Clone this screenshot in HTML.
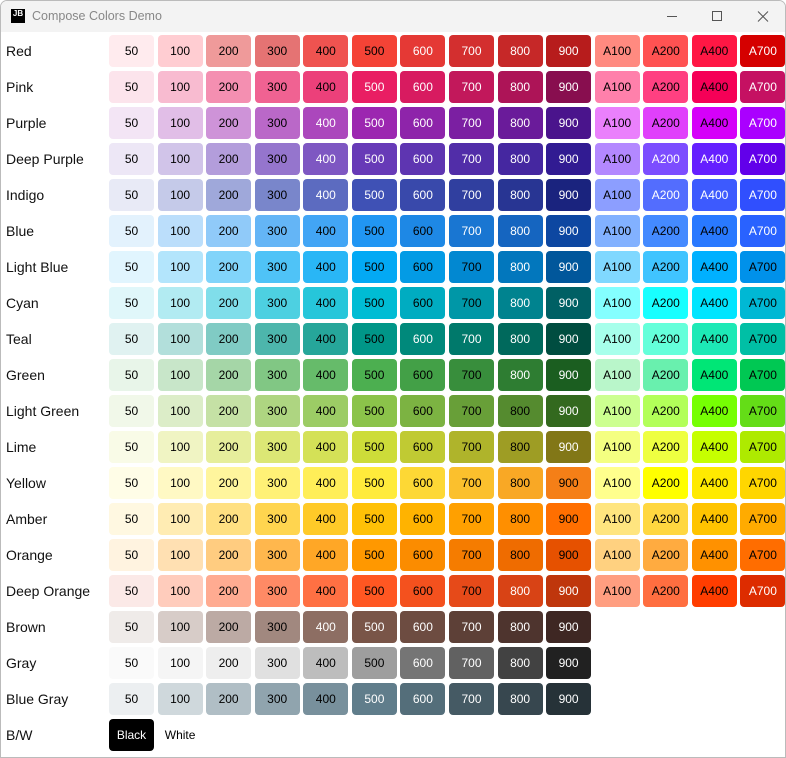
<!DOCTYPE html>
<html><head><meta charset="utf-8"><style>
html,body{margin:0;padding:0;width:786px;height:758px;overflow:hidden;background:#fff;font-family:"Liberation Sans",sans-serif}
#win{position:absolute;left:0;top:0;width:784px;height:756px;border:1px solid #bbb;border-radius:7px 7px 0 0;background:#fff;overflow:hidden}
#tb{position:absolute;left:0;top:0;width:784px;height:31px;background:#f3f3f3}
#logo{position:absolute;left:10px;top:8px;width:14px;height:14px;background:#000;color:#fff;font:bold 8px "Liberation Sans",sans-serif;line-height:9px;text-align:center}
#title{position:absolute;left:31px;top:8px;font-size:12.5px;color:#888}
.lbl{position:absolute;left:5px;font-size:14px;color:#111;line-height:32px}
.c{position:absolute;width:45px;height:32px;border-radius:4px;font-size:12px;line-height:32px;text-align:center}
</style></head><body>
<div id="win">
<div id="tb"><div id="logo">JB<br>_</div><div id="title">Compose Colors Demo</div>
<svg style="position:absolute;left:600px;top:0" width="186" height="31">
<line x1="66" y1="15.5" x2="76" y2="15.5" stroke="#555" stroke-width="1"/>
<rect x="111.5" y="10.5" width="9" height="9" fill="none" stroke="#555"/>
<path d="M157 10.5L167 20.5M167 10.5L157 20.5" stroke="#555"/>
</svg></div>
<div id="g"></div>
</div>
<script>
var P=[
["Red","FFEBEE FFCDD2 EF9A9A E57373 EF5350 F44336 E53935 D32F2F C62828 B71C1C FF8A80 FF5252 FF1744 D50000"],
["Pink","FCE4EC F8BBD0 F48FB1 F06292 EC407A E91E63 D81B60 C2185B AD1457 880E4F FF80AB FF4081 F50057 C51162"],
["Purple","F3E5F5 E1BEE7 CE93D8 BA68C8 AB47BC 9C27B0 8E24AA 7B1FA2 6A1B9A 4A148C EA80FC E040FB D500F9 AA00FF"],
["Deep Purple","EDE7F6 D1C4E9 B39DDB 9575CD 7E57C2 673AB7 5E35B1 512DA8 4527A0 311B92 B388FF 7C4DFF 651FFF 6200EA"],
["Indigo","E8EAF6 C5CAE9 9FA8DA 7986CB 5C6BC0 3F51B5 3949AB 303F9F 283593 1A237E 8C9EFF 536DFE 3D5AFE 304FFE"],
["Blue","E3F2FD BBDEFB 90CAF9 64B5F6 42A5F5 2196F3 1E88E5 1976D2 1565C0 0D47A1 82B1FF 448AFF 2979FF 2962FF"],
["Light Blue","E1F5FE B3E5FC 81D4FA 4FC3F7 29B6F6 03A9F4 039BE5 0288D1 0277BD 01579B 80D8FF 40C4FF 00B0FF 0091EA"],
["Cyan","E0F7FA B2EBF2 80DEEA 4DD0E1 26C6DA 00BCD4 00ACC1 0097A7 00838F 006064 84FFFF 18FFFF 00E5FF 00B8D4"],
["Teal","E0F2F1 B2DFDB 80CBC4 4DB6AC 26A69A 009688 00897B 00796B 00695C 004D40 A7FFEB 64FFDA 1DE9B6 00BFA5"],
["Green","E8F5E9 C8E6C9 A5D6A7 81C784 66BB6A 4CAF50 43A047 388E3C 2E7D32 1B5E20 B9F6CA 69F0AE 00E676 00C853"],
["Light Green","F1F8E9 DCEDC8 C5E1A5 AED581 9CCC65 8BC34A 7CB342 689F38 558B2F 33691E CCFF90 B2FF59 76FF03 64DD17"],
["Lime","F9FBE7 F0F4C3 E6EE9C DCE775 D4E157 CDDC39 C0CA33 AFB42B 9E9D24 827717 F4FF81 EEFF41 C6FF00 AEEA00"],
["Yellow","FFFDE7 FFF9C4 FFF59D FFF176 FFEE58 FFEB3B FDD835 FBC02D F9A825 F57F17 FFFF8D FFFF00 FFEA00 FFD600"],
["Amber","FFF8E1 FFECB3 FFE082 FFD54F FFCA28 FFC107 FFB300 FFA000 FF8F00 FF6F00 FFE57F FFD740 FFC400 FFAB00"],
["Orange","FFF3E0 FFE0B2 FFCC80 FFB74D FFA726 FF9800 FB8C00 F57C00 EF6C00 E65100 FFD180 FFAB40 FF9100 FF6D00"],
["Deep Orange","FBE9E7 FFCCBC FFAB91 FF8A65 FF7043 FF5722 F4511E E64A19 D84315 BF360C FF9E80 FF6E40 FF3D00 DD2C00"],
["Brown","EFEBE9 D7CCC8 BCAAA4 A1887F 8D6E63 795548 6D4C41 5D4037 4E342E 3E2723"],
["Gray","FAFAFA F5F5F5 EEEEEE E0E0E0 BDBDBD 9E9E9E 757575 616161 424242 212121"],
["Blue Gray","ECEFF1 CFD8DC B0BEC5 90A4AE 78909C 607D8B 546E7A 455A64 37474F 263238"]];
var N="50 100 200 300 400 500 600 700 800 900 A100 A200 A400 A700".split(" ");
function lin(v){v/=255;return v<=0.03928?v/12.92:Math.pow((v+0.055)/1.055,2.4)}
function L(h){return .2126*lin(parseInt(h.substr(0,2),16))+.7152*lin(parseInt(h.substr(2,2),16))+.0722*lin(parseInt(h.substr(4,2),16))}
var h="";
function row(i,label){h+='<div class="lbl" style="top:'+(35+36*i-1)+'px">'+label+'</div>'}
function cell(i,j,bg,fg,t){h+='<div class="c" style="left:'+(108+48.57*j).toFixed(1)+'px;top:'+(35+36*i-1)+'px;background:'+bg+';color:'+fg+'">'+t+'</div>'}
P.forEach(function(p,i){row(i,p[0]);p[1].split(" ").forEach(function(c,j){cell(i,j,"#"+c,L(c)<0.2?"#fff":"#000",N[j])})});
row(19,"B/W");cell(19,0,"#000","#fff","Black");cell(19,1,"#fff","#000","White");
document.getElementById("g").innerHTML=h;
</script>
</body></html>
